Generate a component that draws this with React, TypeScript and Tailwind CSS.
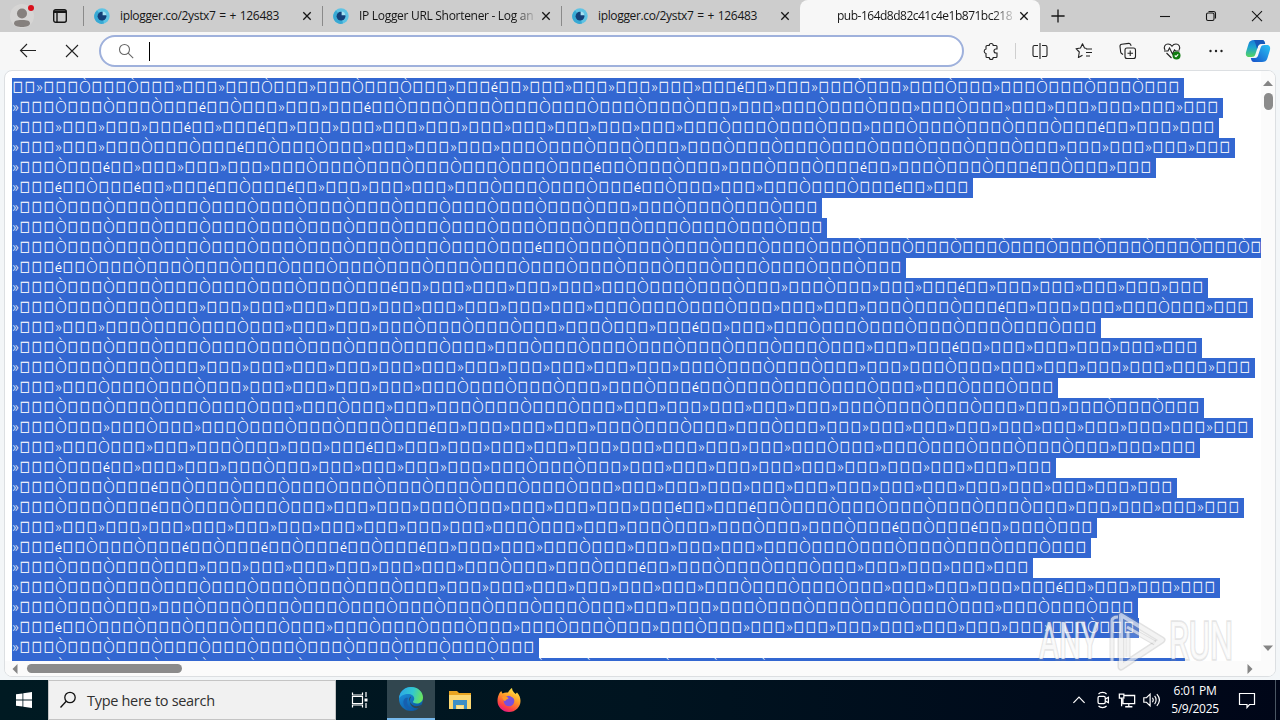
import React from 'react';

// Each row is a run of short groups: a = », o = Ò (three boxes each), e = é (two boxes).
// A number after a letter repeats the group, "b" is a bare box.
const ROWS = [
    'b2aooaaoaooaea5eaaoaoaooo',
    'ao3eoaaeo7aaooaoa5',
    'a4eaea10o3ao4eaa',
    'a3ooeooa4o3ao7a4',
    'aoea4o6eooaooeaooeoa',
    'aeoeaeoea4o3eoaaooea',
    'ao12ao3',
    'ao16',
    'ao10eo18',
    'aeo17',
    'ao7ea5o3aoaaea5',
    'ao3a10o3a3ooea3oa',
    'a3o3a3o3aoaeaao6',
    'ao9ao7aaea5',
    'ao3a12o3aaoa6',
    'aao3a5o3aoeo4aoo',
    'ao5aoaao3a6o3aaoo',
    'aoaoao4ea4ooaoa10',
    'aaoaaoaaea10oao4aa',
    'aoea3oa5ooa10',
    'aooeo9a13',
    'aooeo3a3oa4eaeo6a4',
    'a12oaaoaoaoeoeao',
    'aeooeoeoeoea3oa4o6',
    'ao3a7oaoeao3a4',
    'ao8a7o3a4ea3',
    'aooao9a3o5aoo',
    'aeo5ao3aooaoa8o',
    'ao10',
    'ao12eo3a4ea4',
];

const GROUPS: Record<string, string> = { a: '»□□□', o: 'Ò□□□', e: 'é□□', b: '□' };

const expandRow = (row: string) =>
    row.replace(/([aoeb])(\d*)/g, (_, g, n) => GROUPS[g].repeat(Number(n || 1)));

const CHAR_CLASSES: Record<string, string> = {
    '»': 'w-[7px] text-[14px] font-light -translate-y-px',
    'é': 'w-[7px] text-[13px] -translate-y-px',
    'Ò': 'w-[12px] text-[15.5px] font-light -translate-y-px',
    '□': "w-[12px] text-[12px] font-['DejaVu_Sans'] scale-x-[0.87] scale-y-[1.2] -translate-y-[1.55px] [-webkit-text-stroke:0.2px_white]",
};

const TextRow: React.FC<{ row: string }> = ({ row }) => (
    <div className="flex h-5 w-max bg-[#3367d1] pr-[4px] leading-5">
        {Array.from(expandRow(row)).map((char, i) => (
            <span key={i} className={`flex shrink-0 justify-center ${CHAR_CLASSES[char]}`}>{char}</span>
        ))}
    </div>
);

const Icon: React.FC<{ children: React.ReactNode; className?: string; size?: number }> = ({ children, className = '', size = 20 }) => (
    <svg width={size} height={size} viewBox="0 0 20 20" fill="none" stroke="currentColor" strokeWidth={1.1} className={`shrink-0 ${className}`}>
        {children}
    </svg>
);

const CloseIcon = () => (
    <Icon><path d="M6.3 6.3l7.4 7.4M13.7 6.3l-7.4 7.4" strokeWidth={1.3} /></Icon>
);

const Favicon = () => (
    <svg width="16" height="16" viewBox="0 0 16 16" className="shrink-0">
        <circle cx="8" cy="8" r="7.7" fill="#5fc3e4" />
        <path d="M3 2.5A7.5 7.5 0 0 0 10 15.5L8 8Z" fill="#38a9d4" />
        <circle cx="8" cy="8.2" r="4.4" fill="#143f78" />
        <path d="M8.600 7.200V3.600A4 4 0 0 1 12.400 7.200Z" fill="#a5e2f4" />
    </svg>
);

const TITLE = 'w-[177px] overflow-hidden whitespace-nowrap text-[12px]';

const Tab: React.FC<{ title: string; fade?: boolean; divider?: boolean }> = ({ title, fade, divider = true }) => (
    <div className="flex h-8 w-[239px] items-center pl-[10px]">
        <Favicon />
        <span className={`ml-[10px] ${TITLE} ${fade ? 'tracking-[-0.3px] [mask-image:linear-gradient(to_right,black_88%,transparent_101%)]' : 'tracking-[-0.35px] [word-spacing:1px]'}`}>
            {title}
        </span>
        <CloseIcon />
        {divider && <span className="ml-auto h-5 w-px bg-[#8a8a8a]" />}
    </div>
);

const TabStrip = () => (
    <div className="flex h-8 items-center bg-[#cdcdcd] text-[#161616]">
        <div className="ml-[10px] flex h-6 w-6 items-end justify-center overflow-hidden rounded-full bg-[#d6d5d4]">
            <svg width="18" height="20" viewBox="0 0 18 20" fill="#85807d">
                <circle cx="9" cy="5.5" r="5" />
                <path d="M1 15.5c0-2.5 2-3.5 8-3.5s8 1 8 3.5C17 18 13 19 9 19s-8-1-8-3.5Z" />
            </svg>
        </div>
        <span className="relative -ml-[6px] mb-[16px] h-[6px] w-[6px] rounded-full bg-[#d9101c]" />
        <svg width="16" height="16" viewBox="0 0 16 16" className="ml-[18px]" fill="none" stroke="currentColor" strokeWidth="1.4">
            <rect x="1.7" y="1.7" width="12.6" height="12.6" rx="2" />
            <path d="M2 3.2h12M2 4.4h12M5 4v10" />
        </svg>
        <span className="ml-[15px] h-5 w-px bg-[#8a8a8a]" />
        <Tab title="iplogger.co/2ystx7 = + 126483" />
        <Tab title="IP Logger URL Shortener - Log an" fade />
        <Tab title="iplogger.co/2ystx7 = + 126483" divider={false} />
        <div className="-ml-px flex h-8 w-[240px] items-center rounded-t-lg bg-[#f7f7f7] pl-[37px]">
            <span className={`${TITLE} tracking-[-0.5px] [mask-image:linear-gradient(to_right,black_88%,transparent_102%)]`}>
                pub-164d8d82c41c4e1b871bc218
            </span>
            <CloseIcon />
        </div>
        <Icon size={24} className="ml-[6px]"><path d="M4.5 10h11M10 4.500v11" /></Icon>
        <div className="ml-auto flex">
            <div className="flex w-[46px] justify-center"><Icon><path d="M5 10.5h10" /></Icon></div>
            <div className="flex w-[46px] justify-center">
                <Icon>
                    <rect x="5.5" y="7" width="7.5" height="7.5" rx="1.5" />
                    <path d="M7.5 5.5h5a2 2 0 0 1 2 2v5" />
                </Icon>
            </div>
            <div className="flex w-[46px] justify-center"><Icon><path d="M5 5.2l10 10M15 5.2l-10 10" /></Icon></div>
        </div>
    </div>
);

const Slot: React.FC<{ children: React.ReactNode }> = ({ children }) => (
    <div className="flex w-11 shrink-0 justify-center">{children}</div>
);

const CopilotLogo = () => (
    <svg width="26" height="24" viewBox="0 0 26 24" className="shrink-0">
        <defs>
            <linearGradient id="cpA" x1="0" y1="0" x2="0" y2="1">
                <stop offset="0" stopColor="#187bd8" />
                <stop offset="0.45" stopColor="#1da5ce" />
                <stop offset="1" stopColor="#57d45f" />
            </linearGradient>
            <linearGradient id="cpB" x1="1" y1="0" x2="0" y2="1">
                <stop offset="0" stopColor="#27c4f5" />
                <stop offset="1" stopColor="#174fc9" />
            </linearGradient>
        </defs>
        <path d="M9 1h8c2 0 2.6 1.6 3.2 4H16c-2 0-2.8 1.4-3.4 3.4L10.5 15c-.8 2.4-1.8 3-4 3H4c-3 0-3.7-2.5-2.8-5.5l2.3-7.5C4.4 2 6.2 1 9 1Z" fill="url(#cpA)" />
        <path d="M9 1h8c2 0 2.6 1.6 3.2 4H16c-2 0-2.8 1.4-3.4 3.4l-.6 1.6C11 6 10 3 9 1Z" fill="#1659b9" />
        <path d="M17 23H9c-2 0-2.6-1.6-3.2-4H10c2 0 2.8-1.4 3.4-3.4L15.5 9c.8-2.4 1.8-3 4-3H22c3 0 3.7 2.5 2.8 5.5l-2.3 7.5C21.6 22 19.8 23 17 23Z" fill="url(#cpB)" />
    </svg>
);

const Toolbar = () => (
    <div className="flex h-[38px] items-center bg-[#f7f7f7] pl-[6px] text-[#222]">
        <Slot><Icon><path d="M18 9.5H2.5M9 3L2.5 9.5 9 16" /></Icon></Slot>
        <Slot><Icon><path d="M4 4l12 12M16 4L4 16" /></Icon></Slot>
        <div className="ml-[5px] flex h-8 w-[865px] shrink-0 items-center rounded-full border-2 border-[#9fb1dc] bg-white pl-[15px]">
            <Icon className="text-[#666]">
                <circle cx="8.5" cy="8.5" r="5" />
                <path d="M12.2 12.2l5 5" />
            </Icon>
            <span className="ml-[13px] h-[19px] w-px bg-black" />
        </div>
        <div className="ml-[5px] flex w-[49px] shrink-0 items-center">
            <Slot>
                <Icon>
                    <path d="M6 4.500h2.200a2 2 0 0 1 4 0H15a1 1 0 0 1 1 1V8h-1a2 2 0 0 0 0 4h1v3.500a1 1 0 0 1-1 1h-2.800a2 2 0 0 1-4 0H6a1 1 0 0 1-1-1v-3a2.300 2.300 0 0 1 0-4.500V5.500a1 1 0 0 1 1-1Z" />
                </Icon>
            </Slot>
            <span className="ml-[2px] h-4 w-px bg-[#cfcfcf]" />
        </div>
        <div className="flex items-center">
            <Slot>
                <Icon>
                    <path d="M10 2v16M8 4.5H4.500a1.5 1.5 0 0 0-1.5 1.5v8a1.5 1.5 0 0 0 1.5 1.5H8M12 4.5h3.5A1.5 1.5 0 0 1 17 6v8a1.5 1.5 0 0 1-1.5 1.5H12" />
                </Icon>
            </Slot>
            <Slot>
                <Icon>
                    <path d="M12.5 7.5L10.5 7 8.5 2.7 6.5 7 2 7.7l3.3 3.3-.9 5.5 4.1-2.3M12 8h6M12 11.5h6M12 15h4" strokeLinejoin="round" />
                </Icon>
            </Slot>
            <Slot>
                <Icon>
                    <rect x="7" y="7" width="10.5" height="10.5" rx="2" />
                    <path d="M12.2 9.5v5.5M9.5 12.2H15M5 13.5l-1.7-1.2a2 2 0 0 1-.6-1.2L2 5.5a2 2 0 0 1 1.7-2.2l7-.9a2 2 0 0 1 2 1.2l.4 1.2" />
                </Icon>
            </Slot>
            <Slot>
                <Icon>
                    <path d="M3 9C1 5.5 3.5 3 6 3c2 0 3.2 1 4 2.2C10.8 4 12 3 14 3c2.5 0 5 2.5 3 6M4.5 12l5 5M2 10h4l1.5-3 3 6 2-4 1 1h4" />
                    <circle cx="14.5" cy="14.5" r="4" fill="#107c10" stroke="none" />
                    <path d="M12.7 14.5l1.3 1.2 2.2-2.3" stroke="white" />
                </Icon>
            </Slot>
            <Slot>
                <Icon>
                    <g fill="currentColor" stroke="none">
                        <circle cx="4.5" cy="10" r="1.2" />
                        <circle cx="10" cy="10" r="1.2" />
                        <circle cx="15.5" cy="10" r="1.2" />
                    </g>
                </Icon>
            </Slot>
            <div className="flex w-10 justify-center"><CopilotLogo /></div>
        </div>
    </div>
);

const Arrow: React.FC<{ d: string }> = ({ d }) => (
    <svg width="10" height="10" viewBox="0 0 10 10" fill="#858585" className="shrink-0"><path d={d} /></svg>
);

const WatermarkText: React.FC<{ x: number; width: number; children: string }> = ({ x, width, children }) => (
    <>
        <text x={x} y="52" textLength={width} lengthAdjust="spacingAndGlyphs" fill="none" stroke="#8a8a8a" strokeOpacity="0.22" strokeWidth="3.5">{children}</text>
        <text x={x} y="52" textLength={width} lengthAdjust="spacingAndGlyphs" fill="white" fillOpacity="0.75">{children}</text>
    </>
);

const Watermark = () => (
    <svg width="200" height="66" viewBox="0 0 200 66" className="absolute left-[1032px] top-[536px]" fontFamily="Roboto, sans-serif" fontSize="52">
        <WatermarkText x={2} width={60}>ANY</WatermarkText>
        <WatermarkText x={132} width={64}>RUN</WatermarkText>
        <g fill="none" strokeLinejoin="round">
            <path d="M84 8L125 33 84 60Z" fill="white" fillOpacity="0.15" stroke="#8a8a8a" strokeOpacity="0.25" strokeWidth="7" />
            <path d="M84 8L125 33 84 60Z" stroke="white" strokeOpacity="0.6" strokeWidth="4" />
            <path d="M75 54V14q0-4 6-4M90 20l28 16M91 50V24" stroke="#8a8a8a" strokeOpacity="0.25" strokeWidth="5" />
            <path d="M75 54V14q0-4 6-4M90 20l28 16M91 50V24" stroke="white" strokeOpacity="0.6" strokeWidth="3" />
        </g>
    </svg>
);

const Page = () => (
    <div className="mx-1 h-[607px] overflow-hidden rounded-lg border border-[#dcdfe2] bg-white">
        <div className="relative flex h-[590px]">
            <div className="h-[590px] w-[1256px] overflow-hidden pl-[7px] pt-[7px] text-white">
                {ROWS.map((row, i) => <TextRow key={i} row={row} />)}
            </div>
            <div className="flex w-[14px] flex-col items-center bg-[#fbfbfb] pb-[8px] pt-[7px]">
                <Arrow d="M5 2.5L10 8H0Z" />
                <span className="mt-[5px] h-[17px] w-[9px] rounded-full bg-[#8b8b8b]" />
                <span className="flex-1" />
                <Arrow d="M0 2.5h10L5 8Z" />
            </div>
            <Watermark />
        </div>
        <div className="flex h-[15px] items-center bg-[#fbfbfb] pl-[5px] pr-[20px]">
            <Arrow d="M7.5 0v10L2.5 5Z" />
            <span className="ml-[7px] h-[9px] w-[155px] rounded-full bg-[#8b8b8b]" />
            <span className="flex-1" />
            <Arrow d="M2.5 0v10L7.5 5Z" />
        </div>
    </div>
);

const EdgeLogo = () => (
    <svg width="24" height="24" viewBox="0 0 24 24">
        <defs>
            <linearGradient id="edgeTop" x1="0" y1="0.3" x2="1" y2="0.5">
                <stop offset="0" stopColor="#2ba6e8" />
                <stop offset="0.55" stopColor="#32c8cf" />
                <stop offset="1" stopColor="#6be45b" />
            </linearGradient>
            <linearGradient id="edgeBody" x1="0" y1="0" x2="0.6" y2="1">
                <stop offset="0" stopColor="#1f9de8" />
                <stop offset="1" stopColor="#0c59a4" />
            </linearGradient>
        </defs>
        <circle cx="12" cy="12" r="12" fill="url(#edgeBody)" />
        <path d="M0 11.5C.5 4.5 6 0 12 0c7 0 12 5 12 10.5 0 3.5-2.5 6-6 6-3 0-4.5-1.2-4-2 .6-.8 1.2-1.5 1.2-3C15.2 9 12.5 7 9 7 4 7 1 9.5 0 11.5Z" fill="url(#edgeTop)" />
        <path d="M9 11c-2.500 5 1 11 6.500 12-7 1.500-12-4-11-9C5 11.500 7 10 9 11Z" fill="#165faf" />
        <path d="M12 9.500c-2.500 1-2.500 5.500 1.500 8.500 3 2 7 1.200 9-.5-.5 1.500-1.500 2.500-2.500 3.500-7 1.500-11.500-5-8-11.500Z" fill="#31464f" />
    </svg>
);

const FolderIcon = () => (
    <svg width="22" height="20" viewBox="0 0 22 20">
        <path d="M0 1h8l2 2h12v16H0Z" fill="#e9a521" />
        <path d="M0 5h22v14H0Z" fill="#fcd873" />
        <path d="M4 10h14v9h-3v-4H7v4H4Z" fill="#3d8fc7" />
        <path d="M8 16h6v3H8Z" fill="#fbe59c" />
    </svg>
);

const FirefoxLogo = () => (
    <svg width="24" height="24" viewBox="0 0 24 24">
        <defs>
            <linearGradient id="ffBody" x1="0.8" y1="0" x2="0.3" y2="1">
                <stop offset="0" stopColor="#fff04a" />
                <stop offset="0.45" stopColor="#ff9a28" />
                <stop offset="0.8" stopColor="#fd4045" />
                <stop offset="1" stopColor="#e4178a" />
            </linearGradient>
        </defs>
        <path d="M2.5 5l1.7-2 1.3 2.5C7 4.500 9 4.200 11 4.500c1-2 2.500-3.500 4-4.500.5 3.500 2 4 3.500 6l1.500-1.500c2.500 2.500 3.500 5.500 3.500 8.500 0 6-5 11-11.500 11S.5 19 .5 13c0-3 .7-5.500 2-8Z" fill="url(#ffBody)" />
        <circle cx="12" cy="13" r="5.3" fill="#7950dd" />
        <path d="M5 9c3-1.500 5-.5 6.500 1.500-1 .8-3 .8-3 2.300-1 1-2.500-1-3.500-3.800Z" fill="#ff9a28" />
        <path d="M12 7c3-1 6 1 6 4-1.500-1.500-4-2-6-4Z" fill="#ffb02e" />
    </svg>
);

const Taskbar = () => (
    <div className="flex h-10 items-center bg-linear-to-r from-[#001a22] via-[#001420] to-[#000618] text-white">
        <div className="flex w-12 justify-center">
            <svg width="16" height="16" viewBox="0 0 16 16" fill="white">
                <path d="M0 2.3L6.5 1.4V7.6H0ZM7.3 1.3L16 0V7.6H7.3ZM0 8.4H6.5V14.6L0 13.7ZM7.3 8.4H16V16L7.3 14.7Z" />
            </svg>
        </div>
        <div className="flex h-10 w-[288px] items-center border border-[#c4c4c4] bg-[#f1f1f1] pl-[10px] text-[#303030]">
            <svg width="18" height="18" viewBox="0 0 18 18" fill="none" stroke="#111" strokeWidth="1.3">
                <circle cx="11" cy="6.5" r="5.2" />
                <path d="M7.2 10.3L1.5 16.5" />
            </svg>
            <span className="ml-[10px] mt-px whitespace-nowrap text-[14.5px] tracking-[-0.3px]">Type here to search</span>
        </div>
        <div className="flex w-[51px] pl-[15px]">
            <svg width="18" height="18" viewBox="0 0 18 18" fill="none" stroke="white" strokeWidth="1.2">
                <path d="M1.5 1.5V4H11.5V1.5M1.5 16.5V14H11.5v2.5M1.5 5.5h10v7h-10ZM15 1v5M15 12v5" />
                <path d="M13.5 7.5h3v3h-3Z" fill="white" stroke="none" />
            </svg>
        </div>
        <div className="flex h-10 w-12 items-center justify-center border-b-2 border-[#76b9ed] bg-[#31464f]"><EdgeLogo /></div>
        <div className="flex w-[49px] justify-center"><FolderIcon /></div>
        <div className="flex w-[49px] justify-center"><FirefoxLogo /></div>
        <div className="ml-auto flex items-center">
            <div className="flex w-6 justify-center"><Icon size={16}><path d="M3 13.5l7-7 7 7" strokeWidth={1.5} /></Icon></div>
            <div className="flex w-6 justify-center">
                <Icon size={18}>
                    <rect x="4.5" y="6" width="8" height="8" rx="1.5" strokeWidth={1.4} />
                    <path d="M12.5 9l3.5-2v6l-3.5-2M5 3.5c2-2.5 7-2.5 9 0M5 16.5c2 2.5 7 2.5 9 0" strokeWidth={1.4} />
                </Icon>
            </div>
            <div className="flex w-6 justify-center">
                <Icon size={18}>
                    <path d="M6 5h12.500v9H5.500V9M12 14v3.500M8 17.500h8M1.500 3.500h5V8h-5ZM4 8v9" strokeWidth={1.4} />
                </Icon>
            </div>
            <div className="flex w-6 justify-center">
                <Icon size={18}>
                    <path d="M2 7.500h3l4-4v13l-4-4H2ZM11.500 7.500c1.200 1.500 1.200 3.500 0 5M14 5.500c2.200 2.500 2.200 6.500 0 9M16.500 3.500c3.500 4 3.500 9 0 13" strokeWidth={1.3} />
                </Icon>
            </div>
            <div className="flex w-16 flex-col items-center whitespace-nowrap text-[12px] leading-[18px] tracking-[-0.3px]">
                <span>6:01 PM</span>
                <span>5/9/2025</span>
            </div>
            <div className="flex w-10 justify-center">
                <svg width="18" height="18" viewBox="0 0 18 18" fill="none" stroke="white" strokeWidth="1.2">
                    <path d="M1.5 2.5h15v11h-5L9 16.5V13.5H1.5Z" />
                </svg>
            </div>
            <span className="ml-2 mr-1 h-10 w-px bg-[#4a5663]" />
        </div>
    </div>
);

const App: React.FC = () => (
    <div className="flex h-[720px] w-[1280px] flex-col overflow-hidden bg-[#f3f6f8] font-['Open_Sans','Noto_Sans',sans-serif]">
        <TabStrip />
        <Toolbar />
        <Page />
        <div className="h-[3px]" />
        <Taskbar />
    </div>
);

export default App;
